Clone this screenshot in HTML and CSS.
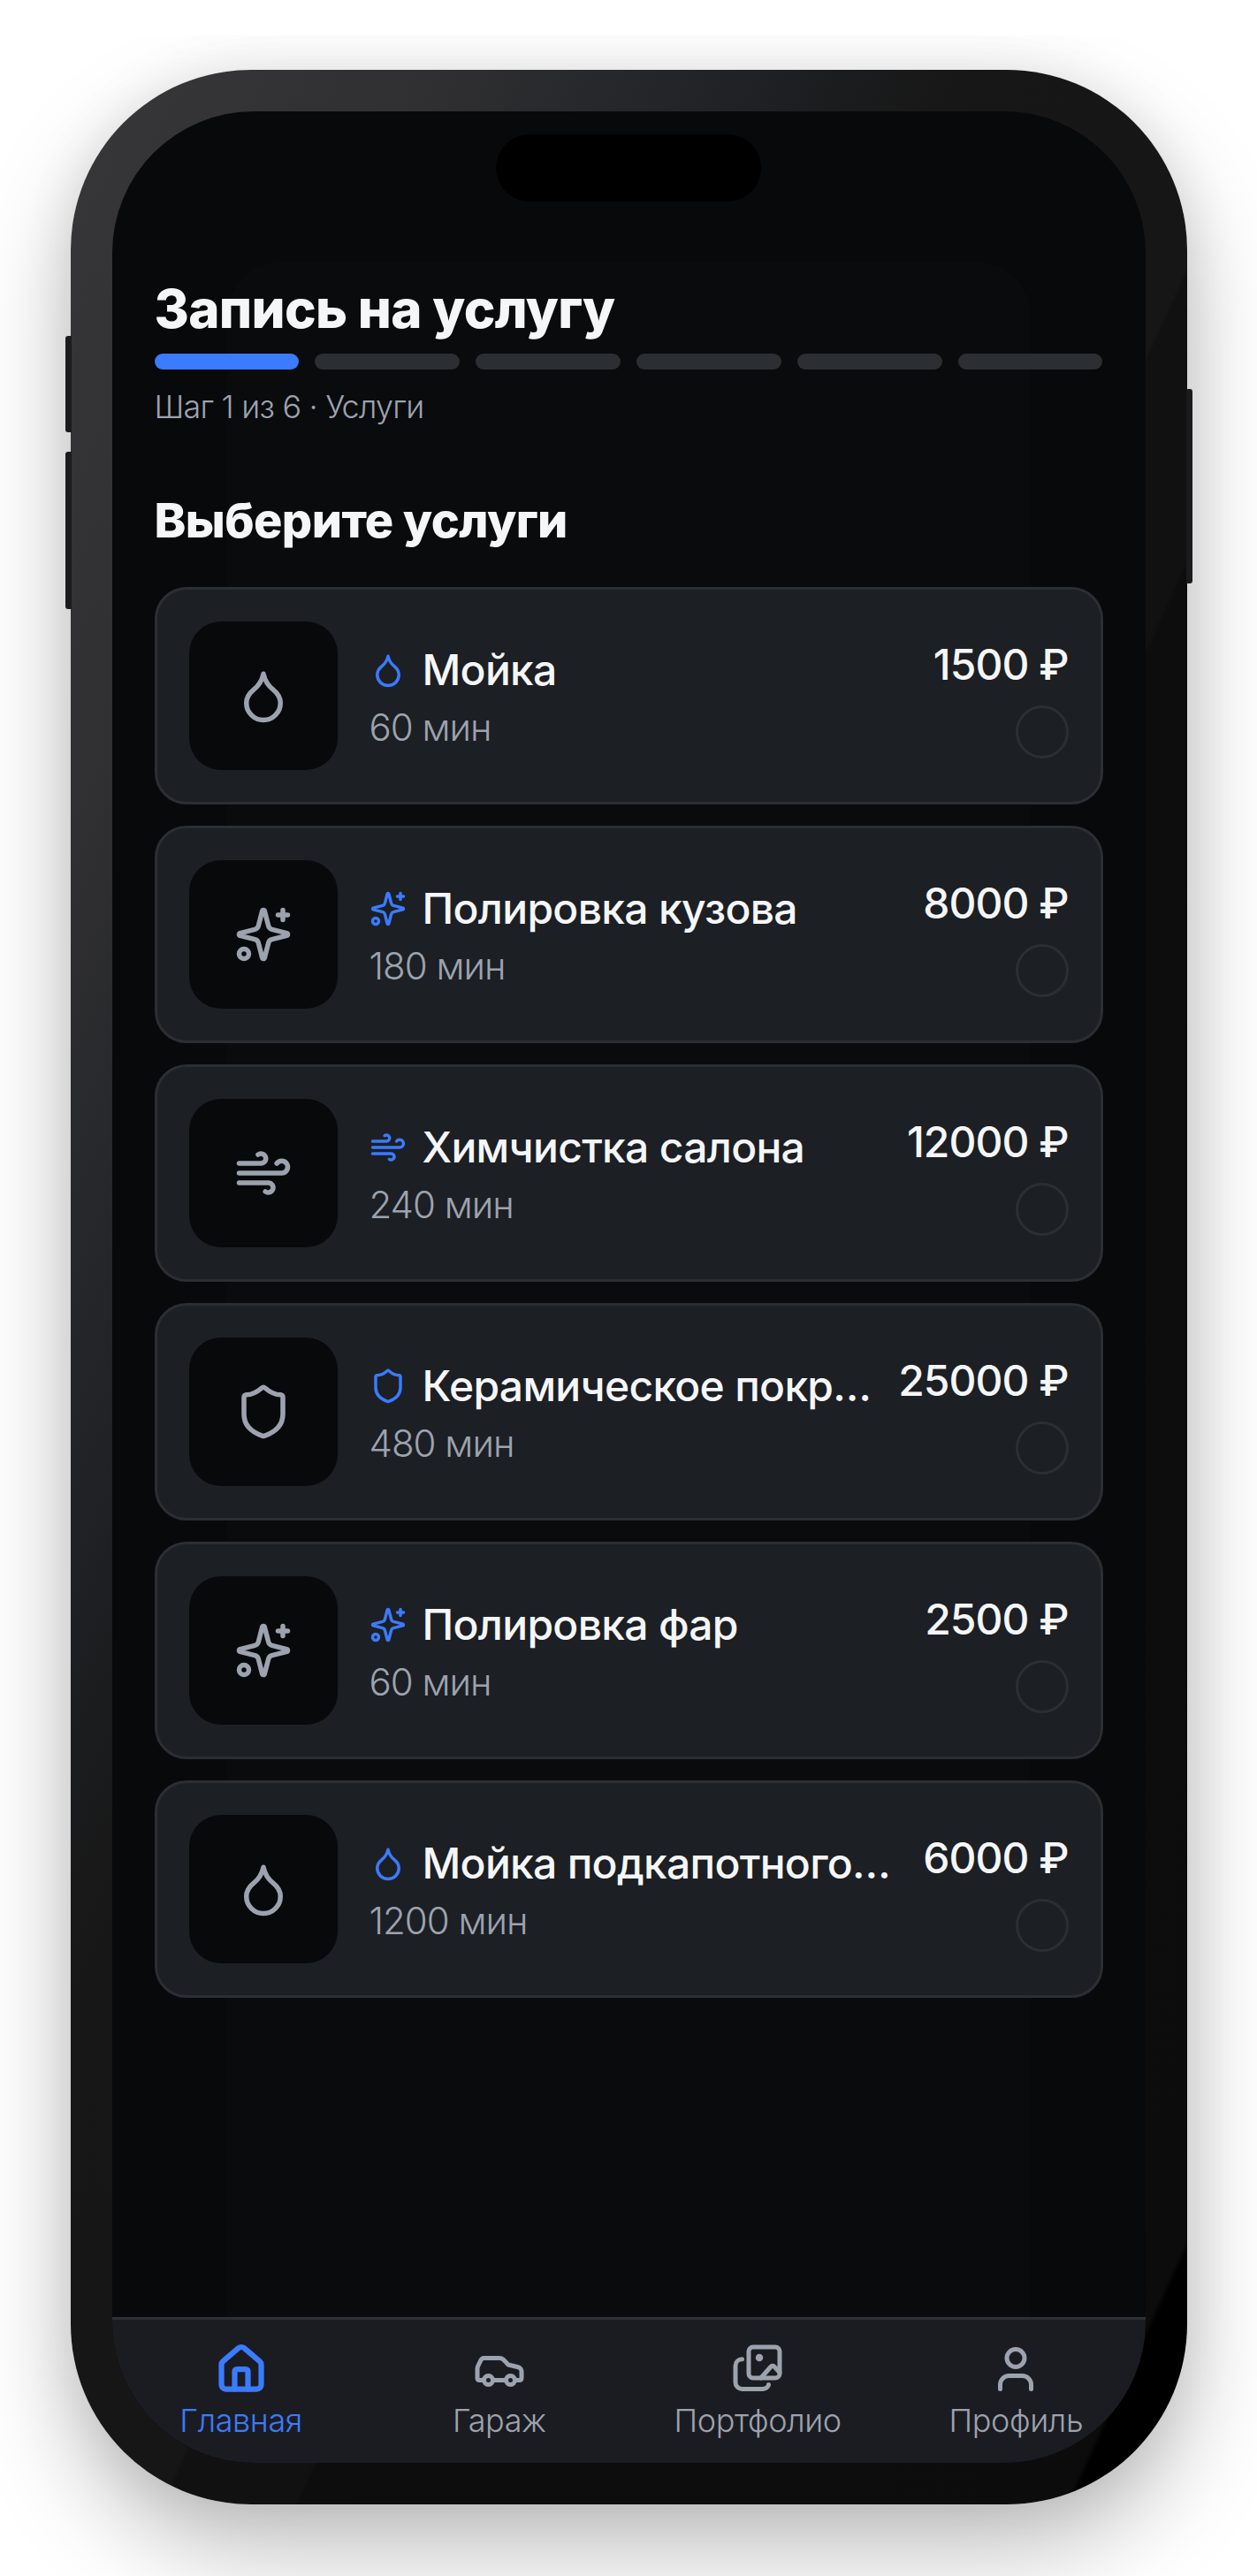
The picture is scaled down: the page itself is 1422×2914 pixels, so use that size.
FILE: index.html
```html
<!DOCTYPE html>
<html lang="ru">
<head>
  <meta charset="UTF-8" />
  <title>Запись на услугу</title>
  <link rel="stylesheet" href="styles.css">
</head>

<body>
  <svg class="sprite" aria-hidden="true">
    <symbol id="i-drop" viewBox="0 0 24 24">
      <path d="M12 22a7 7 0 0 0 7-7c0-2-1-3.9-3-5.5s-3.5-4-4-6.5c-.5 2.5-2 4.9-4 6.5C6 11.1 5 13 5 15a7 7 0 0 0 7 7z" />
    </symbol>
    <symbol id="i-sparkles" viewBox="0 0 24 24">
      <path d="M9.937 15.5A2 2 0 0 0 8.5 14.063l-6.135-1.582a.5.5 0 0 1 0-.962L8.5 9.936A2 2 0 0 0 9.937 8.5l1.582-6.135a.5.5 0 0 1 .963 0L14.063 8.5A2 2 0 0 0 15.5 9.937l6.135 1.581a.5.5 0 0 1 0 .964L15.5 14.063a2 2 0 0 0-1.437 1.437l-1.582 6.135a.5.5 0 0 1-.963 0z" />
      <path d="M20 2v4" />
      <path d="M22 4h-4" />
      <circle cx="4" cy="20" r="2" />
    </symbol>
    <symbol id="i-wind" viewBox="0 0 24 24">
      <path d="M12.8 19.6A2 2 0 1 0 14 16H2" />
      <path d="M17.5 8a2.5 2.5 0 1 1 2 4H2" />
      <path d="M9.8 4.4A2 2 0 1 1 11 8H2" />
    </symbol>
    <symbol id="i-shield" viewBox="0 0 24 24">
      <path d="M20 13c0 5-3.5 7.5-7.66 8.95a1 1 0 0 1-.67-.01C7.5 20.5 4 18 4 13V6a1 1 0 0 1 1-1c2 0 4.5-1.2 6.24-2.72a1.17 1.17 0 0 1 1.52 0C14.51 3.81 17 5 19 5a1 1 0 0 1 1 1z" />
    </symbol>
    <symbol id="i-home" viewBox="0 0 24 24">
      <path d="M15 21v-8a1 1 0 0 0-1-1h-4a1 1 0 0 0-1 1v8" />
      <path d="M3 10a2 2 0 0 1 .709-1.528l7-5.999a2 2 0 0 1 2.582 0l7 5.999A2 2 0 0 1 21 10v9a2 2 0 0 1-2 2H5a2 2 0 0 1-2-2z" />
    </symbol>
    <symbol id="i-car" viewBox="0 0 24 24">
      <path d="M19 17h2c.6 0 1-.4 1-1v-3c0-.9-.7-1.7-1.5-1.9C18.7 10.6 16 10 16 10s-1.3-1.4-2.2-2.3c-.5-.4-1.1-.7-1.8-.7H5c-.6 0-1.1.4-1.4.9l-1.4 2.9A3.7 3.7 0 0 0 2 12v4c0 .6.4 1 1 1h2" />
      <circle cx="7" cy="17" r="2" />
      <path d="M9 17h6" />
      <circle cx="17" cy="17" r="2" />
    </symbol>
    <symbol id="i-images" viewBox="0 0 24 24">
      <rect x="8" y="2" width="14" height="14" rx="2" />
      <circle class="dot" cx="12.8" cy="6.8" r="1.7" />
      <path d="M13.5 16l4.6-5.2a1 1 0 0 1 1.4 0L22 13.5" />
      <path d="M5 7.5c-1.7 0-3 1.3-3 3V18a3 3 0 0 0 3 3h9c1.7 0 3-1 3-2" />
    </symbol>
    <symbol id="i-user" viewBox="0 0 24 24">
      <path d="M19 21v-2a4 4 0 0 0-4-4H9a4 4 0 0 0-4 4v2" />
      <circle cx="12" cy="7" r="4" />
    </symbol>
  </svg>

  <div class="stage">
    <div class="phone">
      <span class="side-btn btn-mute"></span>
      <span class="side-btn btn-volume"></span>
      <span class="side-btn btn-power"></span>

      <div class="screen">
        <div class="island"></div>

        <main class="content">
          <h1>Запись на услугу</h1>
          <div class="progress">
            <span class="active"></span><span></span><span></span><span></span><span></span><span></span>
          </div>
          <p class="step">Шаг 1 из 6 · Услуги</p>

          <h2>Выберите услуги</h2>

          <div class="services">
            <div class="card">
              <div class="thumb"><svg class="icon-lg"><use href="#i-drop" /></svg></div>
              <div class="info">
                <div class="name"><svg class="icon-sm"><use href="#i-drop" /></svg><span>Мойка</span></div>
                <div class="duration">60 мин</div>
              </div>
              <div class="side">
                <div class="price">1500 ₽</div>
                <span class="check"></span>
              </div>
            </div>

            <div class="card">
              <div class="thumb"><svg class="icon-lg"><use href="#i-sparkles" /></svg></div>
              <div class="info">
                <div class="name"><svg class="icon-sm"><use href="#i-sparkles" /></svg><span>Полировка кузова</span></div>
                <div class="duration">180 мин</div>
              </div>
              <div class="side">
                <div class="price">8000 ₽</div>
                <span class="check"></span>
              </div>
            </div>

            <div class="card">
              <div class="thumb"><svg class="icon-lg"><use href="#i-wind" /></svg></div>
              <div class="info">
                <div class="name"><svg class="icon-sm"><use href="#i-wind" /></svg><span>Химчистка салона</span></div>
                <div class="duration">240 мин</div>
              </div>
              <div class="side">
                <div class="price">12000 ₽</div>
                <span class="check"></span>
              </div>
            </div>

            <div class="card">
              <div class="thumb"><svg class="icon-lg"><use href="#i-shield" /></svg></div>
              <div class="info">
                <div class="name"><svg class="icon-sm"><use href="#i-shield" /></svg><span>Керамическое покрытие</span></div>
                <div class="duration">480 мин</div>
              </div>
              <div class="side">
                <div class="price">25000 ₽</div>
                <span class="check"></span>
              </div>
            </div>

            <div class="card">
              <div class="thumb"><svg class="icon-lg"><use href="#i-sparkles" /></svg></div>
              <div class="info">
                <div class="name"><svg class="icon-sm"><use href="#i-sparkles" /></svg><span>Полировка фар</span></div>
                <div class="duration">60 мин</div>
              </div>
              <div class="side">
                <div class="price">2500 ₽</div>
                <span class="check"></span>
              </div>
            </div>

            <div class="card">
              <div class="thumb"><svg class="icon-lg"><use href="#i-drop" /></svg></div>
              <div class="info">
                <div class="name"><svg class="icon-sm"><use href="#i-drop" /></svg><span>Мойка подкапотного пространства</span></div>
                <div class="duration">1200 мин</div>
              </div>
              <div class="side">
                <div class="price">6000 ₽</div>
                <span class="check"></span>
              </div>
            </div>
          </div>
        </main>

        <nav class="tabbar">
          <a class="tab current"><svg class="icon-nav"><use href="#i-home" /></svg><span>Главная</span></a>
          <a class="tab"><svg class="icon-nav"><use href="#i-car" /></svg><span>Гараж</span></a>
          <a class="tab"><svg class="icon-nav"><use href="#i-images" /></svg><span>Портфолио</span></a>
          <a class="tab"><svg class="icon-nav"><use href="#i-user" /></svg><span>Профиль</span></a>
        </nav>
      </div>
    </div>
  </div>
</body>
</html>
```

FILE: styles.css
```css
/* --- Global --- */
* { box-sizing: border-box; margin: 0; padding: 0; }
body {
  font-family: 'Inter', 'Noto Sans', sans-serif;
  background: #fff;
  color: #f5f6f8;
  overflow: hidden;
}
.sprite { display: none; }

/* --- Device --- */
.stage {
  margin-top: 40px;
  height: calc(100vh - 40px);
  padding-top: 39px;
  overflow: hidden;
}
.phone {
  position: relative;
  width: 1263px;
  height: 2754px;
  margin: 0 auto;
  padding: 47px;
  border-radius: 204px;
  background: linear-gradient(to bottom right,
    #373739 0%, #303032 16%, #1f2125 31%, #1c1d1f 34%, #171717 40%,
    #161616 54%, #111 54.2%, #111 60%, #0d0d0d 60.2%,
    #0c0c0c 94.5%, #000 94.8%);
  box-shadow: 0 50px 110px rgba(0,0,0,0.26), 0 0 60px rgba(0,0,0,0.08);
}
.side-btn {
  position: absolute;
  width: 7px;
  background: #1b1b1d;
}
.btn-mute { left: -6px; top: 301px; height: 109px; border-radius: 3px 0 0 3px; }
.btn-volume { left: -6px; top: 432px; height: 178px; border-radius: 3px 0 0 3px; }
.btn-power { right: -6px; top: 361px; height: 220px; border-radius: 0 3px 3px 0; }

.screen {
  position: relative;
  isolation: isolate;
  display: flex;
  flex-direction: column;
  height: 100%;
  border-radius: 160px;
  background: #08090b;
  overflow: hidden;
}
.screen::before {
  content: "";
  position: absolute;
  z-index: -1;
  left: 130px;
  right: 130px;
  top: 171px;
  bottom: 0;
  border-radius: 60px 60px 0 0;
  background: #0a0b0d;
}
.island {
  position: absolute;
  top: 26px;
  left: 50%;
  width: 300px;
  height: 76px;
  margin-left: -150px;
  border-radius: 38px;
  background: #000;
}

/* --- Content --- */
.content {
  flex: 1;
  padding: 187px 48px 0;
}
h1 {
  font-size: 60px;
  line-height: 72px;
  font-weight: 800;
  letter-spacing: -0.7px;
}
.progress {
  display: flex;
  gap: 18px;
  margin-top: 15px;
}
.progress span {
  flex: 1;
  height: 18px;
  border-radius: 9px;
  background: #2b2e33;
}
.progress .active { background: #3b7bff; }
.step {
  margin-top: 18px;
  font-size: 36px;
  line-height: 48px;
  font-weight: 300;
  letter-spacing: -0.8px;
  color: #9ca3af;
}
h2 {
  margin-top: 72px;
  font-size: 54px;
  line-height: 66px;
  font-weight: 800;
  letter-spacing: -0.6px;
}

/* --- Service cards --- */
.services {
  display: flex;
  flex-direction: column;
  gap: 24px;
  margin-top: 42px;
}
.card {
  display: flex;
  align-items: center;
  gap: 30px;
  height: 246px;
  padding: 36px;
  border: 3px solid #2b2e33;
  border-radius: 36px;
  background: #1c1f24;
}
.thumb {
  display: flex;
  align-items: center;
  justify-content: center;
  flex: none;
  width: 168px;
  height: 168px;
  margin-right: 6px;
  border-radius: 36px;
  background: #08090b;
}
svg {
  fill: none;
  stroke: currentColor;
  stroke-width: 2;
  stroke-linecap: round;
  stroke-linejoin: round;
}
.icon-lg { width: 66px; height: 66px; color: #9ca3af; }
.icon-sm { flex: none; width: 42px; height: 42px; color: #3b7bff; }
.icon-nav { width: 60px; height: 60px; }
.dot { fill: currentColor; stroke: none; }

.info { flex: 1; min-width: 0; padding-top: 4px; }
.name {
  display: flex;
  align-items: center;
  gap: 18px;
  font-size: 48px;
  line-height: 60px;
  font-weight: 500;
  letter-spacing: -0.7px;
}
.name span {
  min-width: 0;
  overflow: hidden;
  white-space: nowrap;
  text-overflow: ellipsis;
}
.duration {
  margin-top: 6px;
  font-size: 42px;
  line-height: 57px;
  font-weight: 300;
  letter-spacing: -1px;
  color: #9ca3af;
}
.side {
  display: flex;
  flex: none;
  flex-direction: column;
  align-items: flex-end;
  gap: 11px;
}
.price {
  font-size: 48px;
  line-height: 70px;
  font-weight: 500;
  letter-spacing: -1px;
  white-space: nowrap;
}
.check {
  width: 60px;
  height: 60px;
  border: 3px solid #2b2e33;
  border-radius: 50%;
}

/* --- Tab bar --- */
.tabbar {
  display: grid;
  grid-template-columns: repeat(4, 1fr);
  height: 165px;
  padding-top: 26px;
  border-top: 3px solid #2f3035;
  background: #1b1c21;
}
.tab {
  display: flex;
  flex-direction: column;
  align-items: center;
  gap: 4px;
  font-size: 36px;
  line-height: 48px;
  font-weight: 300;
  letter-spacing: -0.4px;
  color: #9ca3af;
}
.tab.current { color: #3b7bff; }
.tab.current svg { stroke-width: 2.5; }
```
